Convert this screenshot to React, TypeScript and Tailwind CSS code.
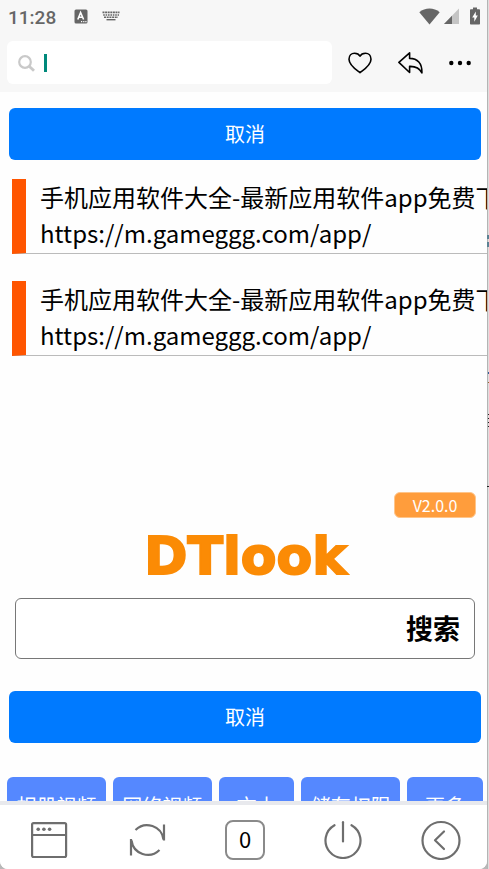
import React, { useState } from 'react';

interface HistoryItem {
  id: number;
  title: string;
  url: string;
}

const HISTORY: HistoryItem[] = [
  { id: 1, title: '手机应用软件大全-最新应用软件app免费下载', url: 'https://m.gameggg.com/app/' },
  { id: 2, title: '手机应用软件大全-最新应用软件app免费下载', url: 'https://m.gameggg.com/app/' },
];

const SHORTCUTS = ['相册视频', '网络视频', '文本', '储存权限', '更多'];

const StatusBar: React.FC = () => (
  <div className="flex h-8 items-center pl-2 pr-[7px] text-[#666666]">
    <span className="pt-1 font-['Roboto',sans-serif] text-[19px] font-medium leading-7">11:28</span>
    <svg className="ml-[18px]" width="14" height="15" viewBox="0 0 14 15">
      <rect x="0.5" y="0.5" width="13" height="14" rx="1.5" fill="currentColor" />
      <path d="M3.8 10.5 L6.6 3.5 L9.6 10.5 M4.8 8.3 H8.6" fill="none" stroke="#fff" strokeWidth="1.6" />
      <path d="M7 12.6h1.2M9.2 12.6h1.2M11.3 12.6h1.2" stroke="#fff" strokeWidth="1.1" />
    </svg>
    <svg className="ml-[14px]" width="18" height="10" viewBox="0 0 18 10" fill="none" stroke="currentColor">
      <path d="M0.5 1.4H17.5" strokeWidth="1.8" strokeDasharray="2 0.6" />
      <path d="M1.2 4H17" strokeWidth="1.5" strokeDasharray="1.6 0.8" />
      <path d="M2 6.3H16" strokeWidth="1.4" strokeDasharray="2 0.7" />
      <path d="M4.5 8.7H13.5" strokeWidth="1.4" />
    </svg>
    <svg className="ml-auto" width="21" height="17" viewBox="0 0 21 17">
      <path d="M0.3 4.2C6-0.8 15-0.8 20.7 4.2L10.5 16.5Z" fill="currentColor" />
    </svg>
    <svg className="ml-1" width="15" height="16" viewBox="0 0 15 16">
      <path d="M0 16L15 0.5V16Z" fill="#c4c4c4" />
      <path d="M0 16L8 7.7V16Z" fill="currentColor" />
    </svg>
    <svg className="ml-[11px]" width="10" height="18" viewBox="0 0 10 18">
      <path d="M3 0.5h4v1.7h2.2q.8 0 .8.8v13.7q0 .8-.8.8H.8q-.8 0-.8-.8V3q0-.8.8-.8H3Z" fill="currentColor" />
      <path d="M5.8 4.5L2.2 10.5H4.3V14.8L7.8 8.6H5.8Z" fill="#fff" />
    </svg>
  </div>
);

const AddressBar: React.FC = () => {
  const [query, setQuery] = useState('');

  return (
    <div className="flex items-center pl-[7px] pr-4 pt-[9px] pb-2">
      <label className="flex h-[43px] min-w-0 flex-1 items-center rounded-md bg-white pl-[11px]">
        <svg width="17" height="18" viewBox="0 0 17 18" fill="none" stroke="#c9c9c9">
          <circle cx="7" cy="8" r="5.8" strokeWidth="2.2" />
          <path d="M11.2 12.2L16 16.8" strokeWidth="2.8" />
        </svg>
        <span className="ml-[9px] h-[18px] w-[3px] bg-[#00897b]" />
        <input
          aria-label="网址"
          value={query}
          onChange={e => setQuery(e.target.value)}
          className="h-full min-w-0 flex-1 bg-transparent text-lg outline-none"
        />
      </label>
      <button aria-label="收藏" className="ml-4">
        <svg width="24" height="22" viewBox="0 0 24 22" fill="none" stroke="#000" strokeWidth="1.6" strokeLinejoin="round">
          <path d="M12 20.7C8.5 18 1 13.2 1 7.2C1 3.6 3.5 1.2 6.5 1.2C9 1.2 11 2.2 12 4.2C13 2.2 15 1.2 17.5 1.2C20.5 1.2 23 3.6 23 7.2C23 13.2 15.5 18 12 20.7Z" />
        </svg>
      </button>
      <button aria-label="返回" className="ml-[26px]">
        <svg width="25" height="22" viewBox="0 0 25 22" fill="none" stroke="#000" strokeWidth="1.6" strokeLinejoin="round">
          <path d="M0.9 10.4L11.6 0.9V6.4C19.5 6.4 24.2 11.2 23.9 20.9C21.5 16 17.5 14.2 11.6 14.4V20.5Z" />
        </svg>
      </button>
      <button aria-label="菜单" className="ml-[26px]">
        <svg width="22" height="6" viewBox="0 0 22 6">
          <circle cx="2.3" cy="3" r="2.2" />
          <circle cx="11" cy="3" r="2.2" />
          <circle cx="19.7" cy="3" r="2.2" />
        </svg>
      </button>
    </div>
  );
};

const CancelButton: React.FC<{ onClick?: () => void }> = ({ onClick }) => (
  <button onClick={onClick} className="ml-[9px] mr-1.5 h-[52px] shrink-0 rounded-md bg-[#007aff] text-xl text-white">
    取消
  </button>
);

const HistoryRow: React.FC<{ item: HistoryItem }> = ({ item }) => (
  <a
    href={item.url}
    className="block overflow-hidden whitespace-nowrap border-b border-l-[14px] border-b-[#bbbbbb] border-l-[#ff5500] pb-0.5 pl-[14px] text-black"
  >
    <div className="text-2xl leading-9">{item.title}</div>
    <div className="text-2xl leading-9">{item.url}</div>
  </a>
);

const BottomNav: React.FC = () => (
  <nav className="flex h-[68px] shrink-0 items-center justify-between border-t-4 border-[#e8e9ed] bg-white pl-[29px] pr-[26px] pt-1.5 text-[#6e6e6e]">
    <button aria-label="窗口" className="flex w-10 justify-center">
      <svg width="37" height="36" viewBox="0 0 37 36" fill="none" stroke="currentColor" strokeWidth="2.2">
        <rect x="1.1" y="1.1" width="34" height="34" rx="1.5" />
        <path d="M1.1 13H35.1" />
        <g fill="currentColor" stroke="none">
          <circle cx="7.2" cy="7.2" r="1.8" />
          <circle cx="12.9" cy="7.2" r="1.8" />
          <circle cx="18.6" cy="7.2" r="1.8" />
        </g>
      </svg>
    </button>
    <button aria-label="刷新" className="flex w-10 justify-center">
      <svg width="37" height="36" viewBox="0 0 37 36" fill="none" stroke="currentColor" strokeWidth="2.2">
        <path d="M6.5 8A16.5 16.5 0 0 1 34.5 17.5" />
        <path d="M35 2.5V18.5" />
        <path d="M30.5 28A16.5 16.5 0 0 1 2.5 18.5" />
        <path d="M2 17V33.5" />
      </svg>
    </button>
    <button className="h-10 w-10 rounded-lg border-2 border-[#8a8a8a] pb-1 text-[22px] leading-8 text-black">0</button>
    <button aria-label="退出" className="flex w-10 justify-center">
      <svg width="38" height="38" viewBox="0 0 38 38" fill="none" stroke="currentColor" strokeWidth="2.2" strokeLinecap="round">
        <path d="M10.5 4.2A17.5 17.5 0 1 0 27.5 4.2" />
        <path d="M19 1.2V20.5" />
      </svg>
    </button>
    <button aria-label="后退" className="flex w-10 justify-center">
      <svg width="40" height="40" viewBox="0 0 40 40" fill="none" stroke="currentColor" strokeWidth="2.2" strokeLinecap="round" strokeLinejoin="round">
        <circle cx="20" cy="20.5" r="18.5" />
        <path d="M23 11.5L14 20.3L23 29" />
      </svg>
    </button>
  </nav>
);

// Sliver of the desktop that shows beside the emulator window
const DesktopEdge: React.FC = () => (
  <svg aria-hidden="true" className="h-screen w-0.5 shrink-0 bg-[#dedede]">
    <rect x="0" y="0" width="1" height="100%" fill="#b4b4b4" />
    <rect x="0" y="235" width="2" height="4" fill="#5b8294" />
    <rect x="0" y="242" width="2" height="5" fill="#5b8294" />
    <rect x="1" y="372" width="1" height="2" fill="#355f9a" />
    <rect x="1" y="382" width="1" height="1" fill="#96642a" />
    <path d="M1 414.5h1M1 418.5h1M1 422.5h1M1 426.5h1M0 486.5h2" stroke="#222" />
  </svg>
);

const App: React.FC = () => {
  const [keyword, setKeyword] = useState('');

  return (
    <div className="flex h-screen overflow-hidden bg-[#b8b8b8] font-['Noto_Sans_CJK_SC',sans-serif]">
      <div className="flex min-w-0 flex-1 flex-col overflow-hidden rounded-b-lg bg-[#fefefe]">
        <header className="shrink-0 bg-[#f7f7f7]">
          <StatusBar />
          <AddressBar />
        </header>

        <main className="flex min-h-0 flex-1 flex-col overflow-hidden pt-4">
          <CancelButton />

          <div className="mt-[19px] ml-3 flex shrink-0 flex-col gap-[27px]">
            {HISTORY.map(item => (
              <HistoryRow key={item.id} item={item} />
            ))}
          </div>

          <div className="mt-[136px] mr-[11px] h-[26px] w-[82px] shrink-0 self-end rounded-md border border-[#ffc58a] bg-[#ff9d3c] text-center text-base leading-6 text-white">
            V2.0.0
          </div>

          <h1 className="mt-1.5 shrink-0 pl-1 text-center font-['DejaVu_Sans',sans-serif] text-[52px] font-bold leading-[64px] text-[#fb8b05] [-webkit-text-stroke:2px_#fb8b05]">
            DTlook
          </h1>

          <form
            className="mt-2.5 mr-3 ml-[15px] flex h-[61px] shrink-0 rounded-md border border-[#777777] bg-white"
            onSubmit={e => e.preventDefault()}
          >
            <input
              aria-label="搜索"
              value={keyword}
              onChange={e => setKeyword(e.target.value)}
              className="min-w-0 flex-1 bg-transparent px-3 text-2xl outline-none"
            />
            <button type="submit" className="pr-[14px] text-[27px] font-bold text-black">
              搜索
            </button>
          </form>

          <div className="mt-8 flex shrink-0 flex-col">
            <CancelButton />
          </div>

          <div className="mt-[34px] flex shrink-0 gap-[7px] pl-[7px] pr-1">
            {SHORTCUTS.map(label => (
              <button
                key={label}
                className={`h-[58px] rounded-md bg-[#5588ff] text-xl text-white ${label.length > 2 ? 'flex-[99]' : 'flex-[76]'}`}
              >
                {label}
              </button>
            ))}
          </div>
        </main>

        <BottomNav />
      </div>
      <DesktopEdge />
    </div>
  );
};

export default App;
